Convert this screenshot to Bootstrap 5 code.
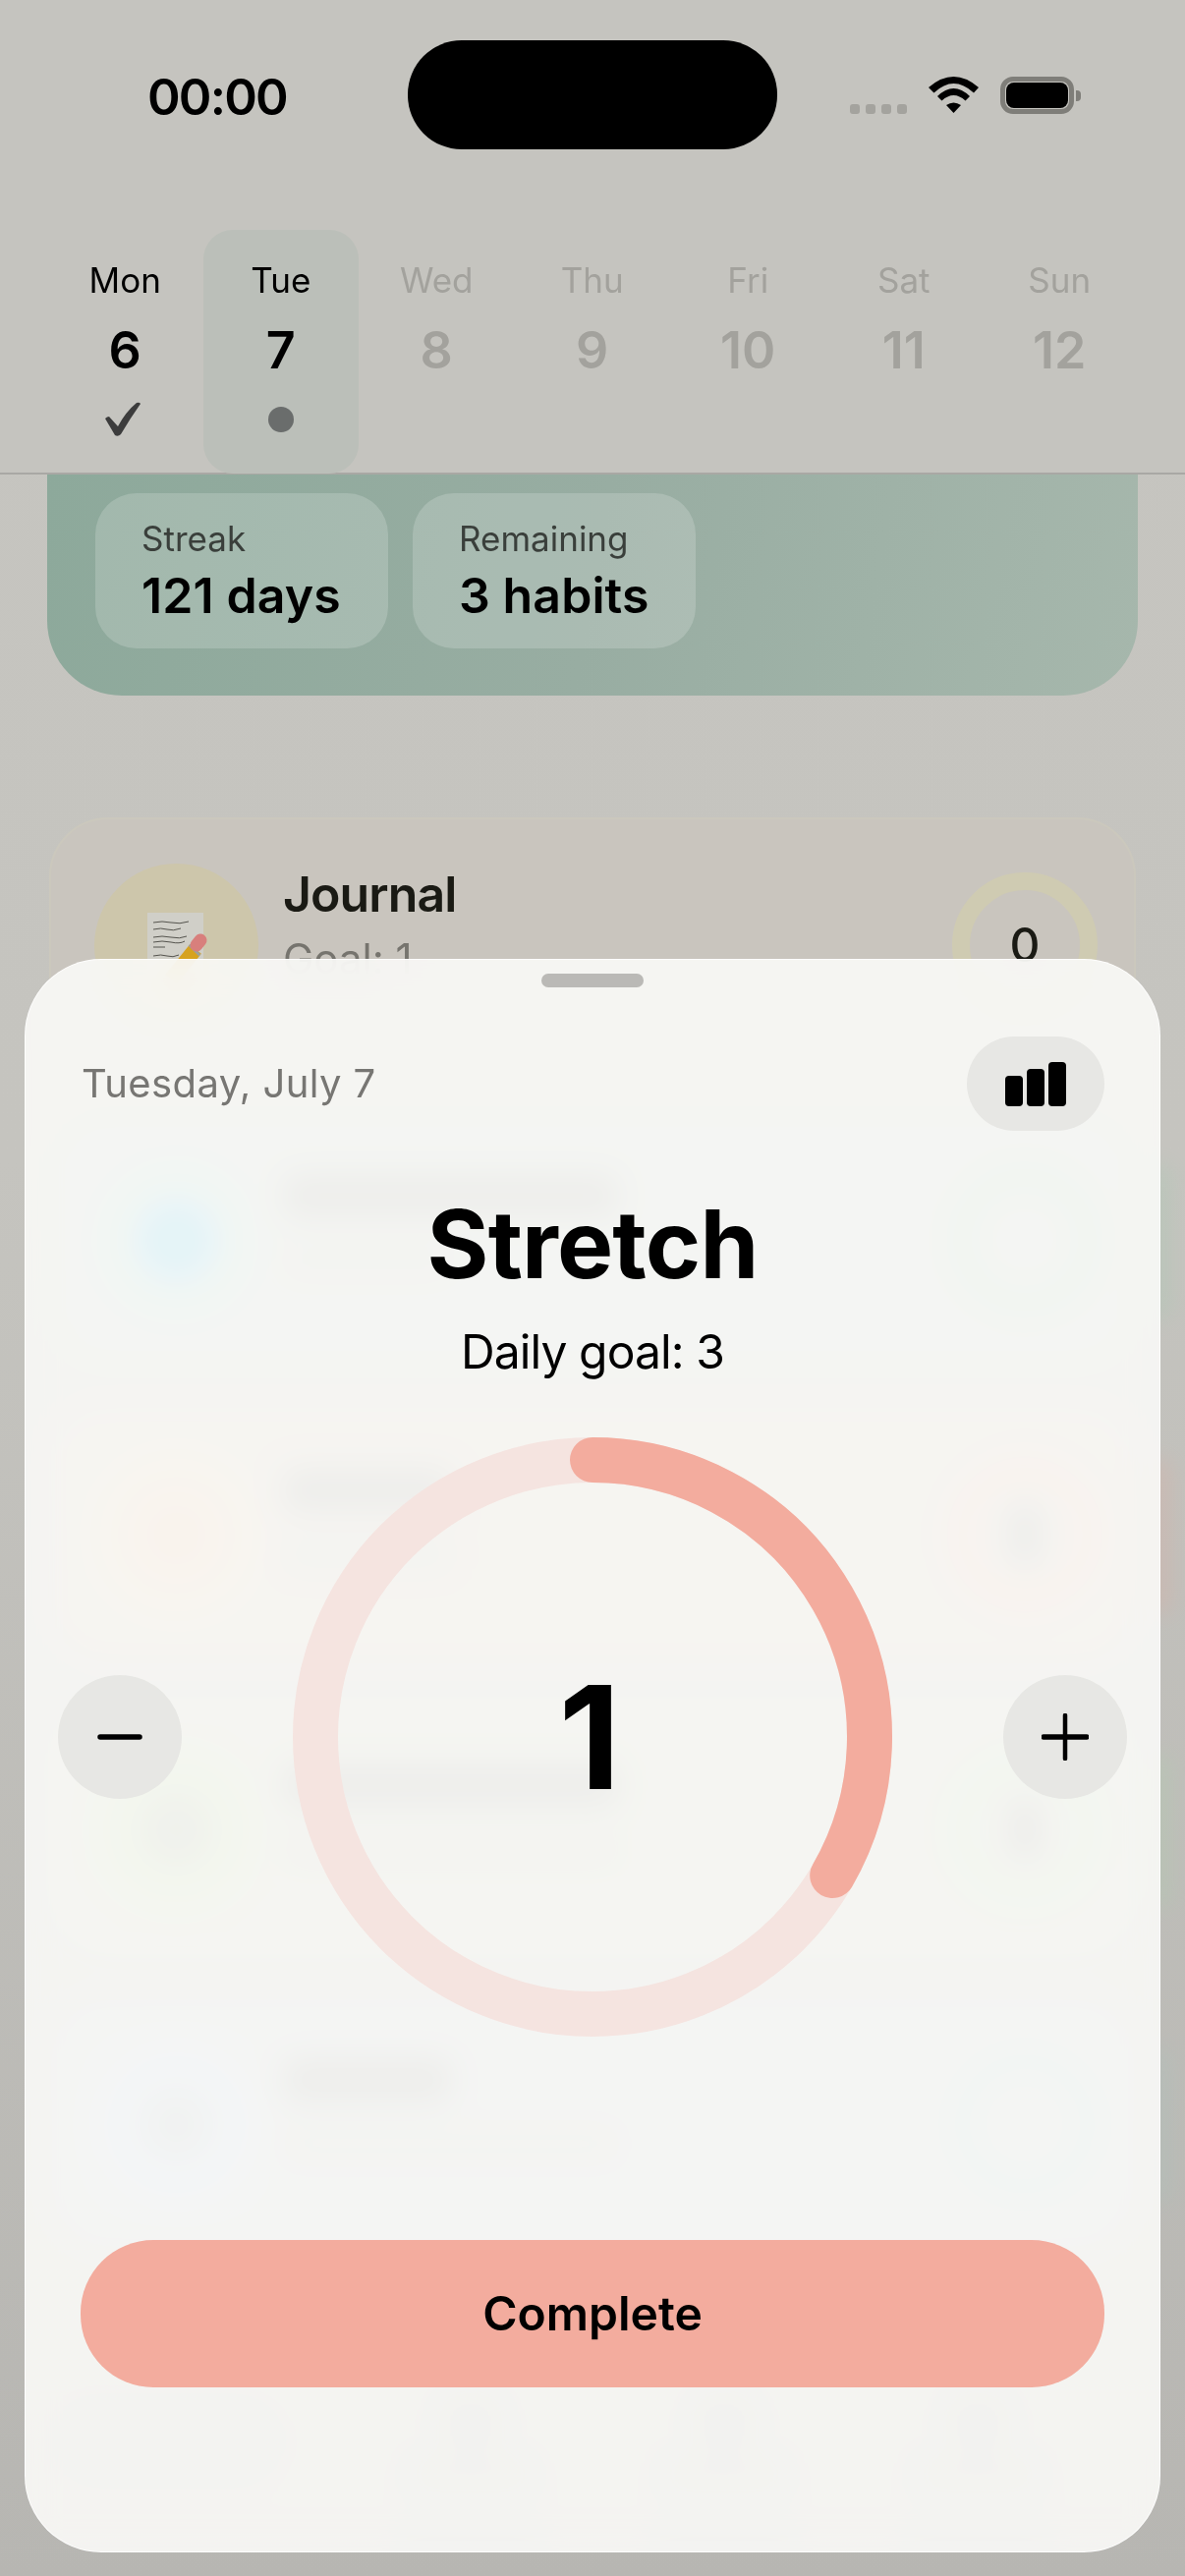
<!DOCTYPE html>
<html lang="en">
<head>
<meta charset="UTF-8">
<meta name="viewport" content="width=device-width, initial-scale=1.0">
<title>Stretch</title>
<link href="https://cdn.jsdelivr.net/npm/bootstrap@5.3.3/dist/css/bootstrap.min.css" rel="stylesheet">
<style>
body { margin: 0; width: 1206px; height: 2622px; overflow: hidden; font-family: Inter, "Liberation Sans", sans-serif; background: linear-gradient(180deg, #c6c5c0 0%, #c5c4bf 45%, #b7b6b2 100%); color: #000; }
.phone { width: 1206px; height: 2622px; overflow: hidden; }

/* top bar */
.top-bar { height: 483px; background: #c5c4bf; border-bottom: 2px solid #a9a8a4; position: relative; z-index: 2; }
.status-row { padding: 41px 0 0 150px; height: 152px; }
.status-time { width: 265px; font-size: 51px; font-weight: 600; line-height: 111px; height: 111px; padding-top: 2px; letter-spacing: -1.800px; }
.island { width: 376px; height: 111px; border-radius: 55px; background: #000; }
.status-icons { margin-left: 74px; height: 111px; padding-top: 37px; }
.signal-dots { gap: 6px; margin-top: 28px; margin-right: 22px; }
.signal-dots span { width: 10px; height: 10px; border-radius: 3px; background: #a4a39e; }
.battery-box { width: 75px; height: 38px; border: 5px solid #7f7e79; border-radius: 13px; padding: 1px; margin-left: 22px; }
.battery-box span { display: block; width: 100%; height: 100%; background: #000; border-radius: 8px; }
.battery-tip { width: 5px; height: 11px; background: #7f7e79; border-radius: 0 4px 4px 0; margin: 14px 0 0 2px; }

.week-row { display: grid; grid-template-columns: repeat(7, 158.5px); margin: 82px 0 0 48px; }
.day-col { height: 248px; padding-top: 30px; text-align: center; color: #a3a29d; border-radius: 30px; }
.day-col.is-live { color: #000; }
.day-col.is-today { background: #bbbfb9; }
.day-name { font-size: 35px; line-height: 42px; }
.day-num { font-size: 52px; font-weight: 600; line-height: 60px; margin-top: 21px; }
.day-mark { height: 46px; margin-top: 17px; }
.today-dot { width: 26px; height: 26px; border-radius: 50%; background: #6a6d6c; }

/* hero card */
.hero-card { height: 225px; margin: 0 48px; padding: 19px 0 0 49px; gap: 25px; border-radius: 0 0 76px 76px; background: linear-gradient(100deg, #8da99b 0%, #98ada2 50%, #a6b7ac 100%); }
.stat-pill { height: 158px; padding: 25px 0 0 47px; border-radius: 42px; background: rgba(255,255,255,.18); }
.pill-a { width: 298px; }
.pill-b { width: 288px; }
.stat-label { font-size: 35px; line-height: 42px; color: #3a3f3b; }
.stat-value { font-size: 50px; font-weight: 600; line-height: 58px; margin-top: 8px; letter-spacing: .1px; }

/* habit rows behind the sheet */
.habit-list { margin: 124px 50px 0; gap: 40px; }
.habit-row { position: relative; height: 260px; padding: 0 37px 0 44px; border-radius: 60px; background: #c9c5be; border: 2px solid #cbc8bd; }
.habit-ico { width: 167px; height: 167px; border-radius: 50%; background: #cdc6ab; flex: none; }
.habit-text { margin-left: 26px; margin-bottom: 42px; }
.habit-name { font-size: 50px; font-weight: 600; line-height: 60px; color: #1a1a14; letter-spacing: -.9px; margin-left: -1px; }
.habit-goal { font-size: 42px; line-height: 52px; color: #76746e; margin-top: 10px; margin-left: -1px; }
.habit-ring { width: 148px; height: 148px; border-radius: 50%; border: 18px solid #cfcbb2; font-size: 48px; font-weight: 500; color: #1a1a14; flex: none; }
.ghost-title { height: 44px; background: #6f6f6c; border-radius: 10px; margin: 0 0 26px 0; }
.ghost-sub { height: 34px; background: #b3b3af; border-radius: 10px; }
.ghost-num { width: 36px; height: 60px; background: #6f6f6c; border-radius: 8px; }
.habit-row.tint-blue .habit-text, .habit-row.tint-orange .habit-text, .habit-row.tint-green .habit-text, .habit-row.tint-slate .habit-text { margin-bottom: 30px; }
.tint-blue { background: #bfc9c6; }
.tint-blue .habit-ico { background: radial-gradient(circle, #20adff 0 34px, #a9d4ca 44px); }
.tint-blue .habit-ring { border-color: #8fd0a8; }
.tint-blue::after, .tint-orange::after, .tint-green::after, .tint-slate::after { content: ""; position: absolute; right: -40px; top: 50px; width: 30px; height: 160px; border-radius: 14px; background: #8fd0a8; opacity: .16; filter: blur(10px); }
.tint-orange { background: #d3c5ba; }
.tint-orange .habit-ico { background: radial-gradient(circle, #f0b090 0 30px, #e6c7a8 44px); }
.tint-orange .habit-ring { border-color: #f09c8c; }
.tint-orange::after { background: #f09c8c; }
.tint-green { background: #c8ccbd; }
.tint-green .habit-ico { background: radial-gradient(circle, #8d9a80 0 30px, #bcdaa4 44px); }
.tint-green .habit-ring { border-color: #9fdca6; }
.tint-green::after { background: #9fdca6; }
.tint-slate { background: #c0c6cc; }
.tint-slate .habit-ico { background: radial-gradient(circle, #9da6b3 0 30px, #bccfe8 44px); }
.tint-slate .habit-ring { border-color: #9cc8be; }
.tint-slate::after { background: #9cc8be; }
.tab-row { margin: 144px 50px 0; height: 170px; }
.tab-pill { width: 240px; height: 90px; border-radius: 45px; background: #b4b3af; margin-right: 60px; }
.tab-col { width: 258px; }
.tab-ico { width: 64px; height: 60px; background: #a5a5a2; border-radius: 16px; }
.tab-txt { width: 120px; height: 28px; background: #a5a5a2; border-radius: 8px; margin-top: 8px; }
.tab-line { width: 130px; height: 6px; background: #8f8f8c; border-radius: 3px; margin-top: 48px; }

/* sheet */
.sheet { position: absolute; z-index: 3; left: 25px; top: 976px; width: 1156px; height: 1622px; border: 1px solid rgba(255,255,255,.85); border-radius: 78px; background: rgba(249,249,246,.92); -webkit-backdrop-filter: blur(16px) saturate(1.4); backdrop-filter: blur(16px) saturate(1.4); }
.sheet-handle { width: 104px; height: 14px; margin: 14px auto 0; border-radius: 7px; background: #bab9b6; }
.sheet-top { margin: 50px 56px 0 57px; height: 96px; }
.sheet-date { font-size: 40px; color: #777673; line-height: 48px; letter-spacing: .4px; }
.stats-btn { width: 140px; height: 96px; border-radius: 48px; background: #e7e7e4; padding: 0; border: 0; }
.sheet-title { font-size: 96px; font-weight: 700; line-height: 110px; margin: 60px 0 0; color: #000; letter-spacing: -.8px; }
.sheet-goal { font-size: 48px; line-height: 58px; margin-top: 26px; letter-spacing: -.9px; }
.count-row { margin-top: 58px; padding: 0 33px; }
.round-btn { width: 126px; height: 126px; padding: 0; border: 0; background: #e7e7e4; }
.ring-stack { display: grid; width: 610px; height: 610px; place-items: center; }
.ring-stack > * { grid-area: 1 / 1; }
.count-num { font-size: 146px; font-weight: 700; line-height: 1; padding-right: 6px; }
.done-btn { display: block; width: 1042px; height: 150px; margin: 207px 0 0 56px; border: 0; border-radius: 74px; background: #f3ac9e; font-size: 48px; font-weight: 600; color: #000; }
.done-btn:hover { background: #f3ac9e; color: #000; }
</style>
</head>
<body>
<div class="phone">
  <header class="top-bar">
    <div class="status-row d-flex">
      <div class="status-time">00:00</div>
      <div class="island"></div>
      <div class="status-icons d-flex align-items-start">
        <div class="signal-dots d-flex"><span></span><span></span><span></span><span></span></div>
        <svg width="51" height="37" viewBox="0 0 51 37">
          <path d="M0 11Q25.5-11 51 11L46 16.500Q25.500-2.500 5.500 16.500Z" fill="#000"/>
          <path d="M9 20Q25.500 4 42 20L37.500 24.500Q25.500 13.500 13.500 24.500Z" fill="#000"/>
          <path d="M18 29Q25.500 24 33 29L25.500 37Z" fill="#000"/>
        </svg>
        <div class="battery-box"><span></span></div>
        <div class="battery-tip"></div>
      </div>
    </div>
    <div class="week-row">
      <div class="day-col is-live">
        <div class="day-name">Mon</div>
        <div class="day-num">6</div>
        <div class="day-mark d-flex justify-content-center align-items-center">
          <svg class="me-1" width="38" height="36" viewBox="0 0 38 36"><path d="M1 17Q3 15 5 15L14 25Q22 10 33 1Q36 0 37 2Q27 16 17 33Q14 36 11 34Z" fill="#3c3c3c"/></svg>
        </div>
      </div>
      <div class="day-col is-live is-today">
        <div class="day-name">Tue</div>
        <div class="day-num">7</div>
        <div class="day-mark d-flex justify-content-center align-items-center"><div class="today-dot"></div></div>
      </div>
      <div class="day-col"><div class="day-name">Wed</div><div class="day-num">8</div></div>
      <div class="day-col"><div class="day-name">Thu</div><div class="day-num">9</div></div>
      <div class="day-col"><div class="day-name">Fri</div><div class="day-num">10</div></div>
      <div class="day-col"><div class="day-name">Sat</div><div class="day-num">11</div></div>
      <div class="day-col"><div class="day-name">Sun</div><div class="day-num">12</div></div>
    </div>
  </header>

  <section class="hero-card d-flex">
    <div class="stat-pill pill-a">
      <div class="stat-label">Streak</div>
      <div class="stat-value">121 days</div>
    </div>
    <div class="stat-pill pill-b">
      <div class="stat-label">Remaining</div>
      <div class="stat-value">3 habits</div>
    </div>
  </section>

  <section class="habit-list d-flex flex-column">
    <div class="habit-row d-flex align-items-center">
      <div class="habit-ico">
        <svg width="167" height="167" viewBox="0 0 167 167">
          <rect x="54" y="50" width="57" height="66" fill="#d0cfc8"/>
          <path d="M60 60q9-2 18 0t18-1M60 67q8-2 14 0t14-1M60 75q9-2 18 0t16-1M60 80q9-2 18 0t14-1M60 85h12M60 94q8-2 14 0t12-1" stroke="#55544e" stroke-width="1" fill="none"/>
          <path d="M78 118 103 87" stroke="#d6a21f" stroke-width="15" fill="none"/>
          <path d="M101 89 103 87" stroke="#9aa0a0" stroke-width="15" fill="none"/>
          <path d="M104 83 108 78" stroke="#d87f7c" stroke-width="13" stroke-linecap="round" fill="none"/>
        </svg>
      </div>
      <div class="habit-text flex-grow-1">
        <div class="habit-name">Journal</div>
        <div class="habit-goal">Goal: 1</div>
      </div>
      <div class="habit-ring d-flex align-items-center justify-content-center">0</div>
    </div>
    <div class="habit-row tint-blue d-flex align-items-center">
      <div class="habit-ico"></div>
      <div class="habit-text flex-grow-1"><div class="ghost-title w-50"></div><div class="ghost-sub w-25"></div></div>
      <div class="habit-ring"></div>
    </div>
    <div class="habit-row tint-orange d-flex align-items-center">
      <div class="habit-ico"></div>
      <div class="habit-text flex-grow-1"><div class="ghost-title w-25"></div><div class="ghost-sub w-25"></div></div>
      <div class="habit-ring d-flex align-items-center justify-content-center"><div class="ghost-num"></div></div>
    </div>
    <div class="habit-row tint-green d-flex align-items-center">
      <div class="habit-ico"></div>
      <div class="habit-text flex-grow-1"><div class="ghost-title w-50"></div><div class="ghost-sub w-50"></div></div>
      <div class="habit-ring d-flex align-items-center justify-content-center"><div class="ghost-num"></div></div>
    </div>
    <div class="habit-row tint-slate d-flex align-items-center">
      <div class="habit-ico"></div>
      <div class="habit-text flex-grow-1"><div class="ghost-title w-25"></div><div class="ghost-sub w-50"></div></div>
      <div class="habit-ring"></div>
    </div>
  </section>

  <nav class="tab-row d-flex align-items-start">
    <div class="tab-pill"></div>
    <div class="tab-col d-flex flex-column align-items-center"><div class="tab-ico"></div><div class="tab-txt"></div><div class="tab-line"></div></div>
    <div class="tab-col d-flex flex-column align-items-center"><div class="tab-ico"></div><div class="tab-txt"></div><div class="tab-line"></div></div>
    <div class="tab-col d-flex flex-column align-items-center"><div class="tab-ico"></div><div class="tab-txt"></div><div class="tab-line"></div></div>
  </nav>

  <div class="sheet">
    <div class="sheet-handle"></div>
    <div class="sheet-top d-flex justify-content-between align-items-center">
      <div class="sheet-date">Tuesday, July 7</div>
      <button class="btn stats-btn d-flex align-items-center justify-content-center" type="button" aria-label="Stats">
        <svg width="62" height="45" viewBox="0 0 62 45">
          <rect x="0" y="14" width="18" height="31" rx="4" fill="#000"/>
          <rect x="22" y="7" width="18" height="38" rx="4" fill="#000"/>
          <rect x="44" y="0" width="18" height="45" rx="4" fill="#000"/>
        </svg>
      </button>
    </div>
    <h1 class="sheet-title text-center">Stretch</h1>
    <div class="sheet-goal text-center">Daily goal: 3</div>
    <div class="count-row d-flex justify-content-between align-items-center">
      <button class="btn round-btn rounded-circle d-flex align-items-center justify-content-center" type="button" aria-label="Minus">
        <svg width="46" height="8" viewBox="0 0 46 8"><path d="M3 4h40" stroke="#000" stroke-width="5.500" stroke-linecap="round"/></svg>
      </button>
      <div class="ring-stack">
        <svg width="610" height="610" viewBox="0 0 610 610">
          <circle cx="305" cy="305" r="282" fill="none" stroke="#f5e4e0" stroke-width="46"/>
          <path d="M305 23A282 282 0 0 1 549.200 446" fill="none" stroke="#f3ac9e" stroke-width="46" stroke-linecap="round"/>
        </svg>
        <div class="count-num">1</div>
      </div>
      <button class="btn round-btn rounded-circle d-flex align-items-center justify-content-center" type="button" aria-label="Plus">
        <svg width="48" height="48" viewBox="0 0 48 48"><path d="M2 24h44" stroke="#000" stroke-width="5.500" stroke-linecap="round"/><path d="M24 2v44" stroke="#000" stroke-width="4.500" stroke-linecap="round"/></svg>
      </button>
    </div>
    <button class="btn done-btn" type="button">Complete</button>
  </div>
</div>
<script src="https://cdn.jsdelivr.net/npm/bootstrap@5.3.3/dist/js/bootstrap.bundle.min.js"></script>
</body>
</html>
